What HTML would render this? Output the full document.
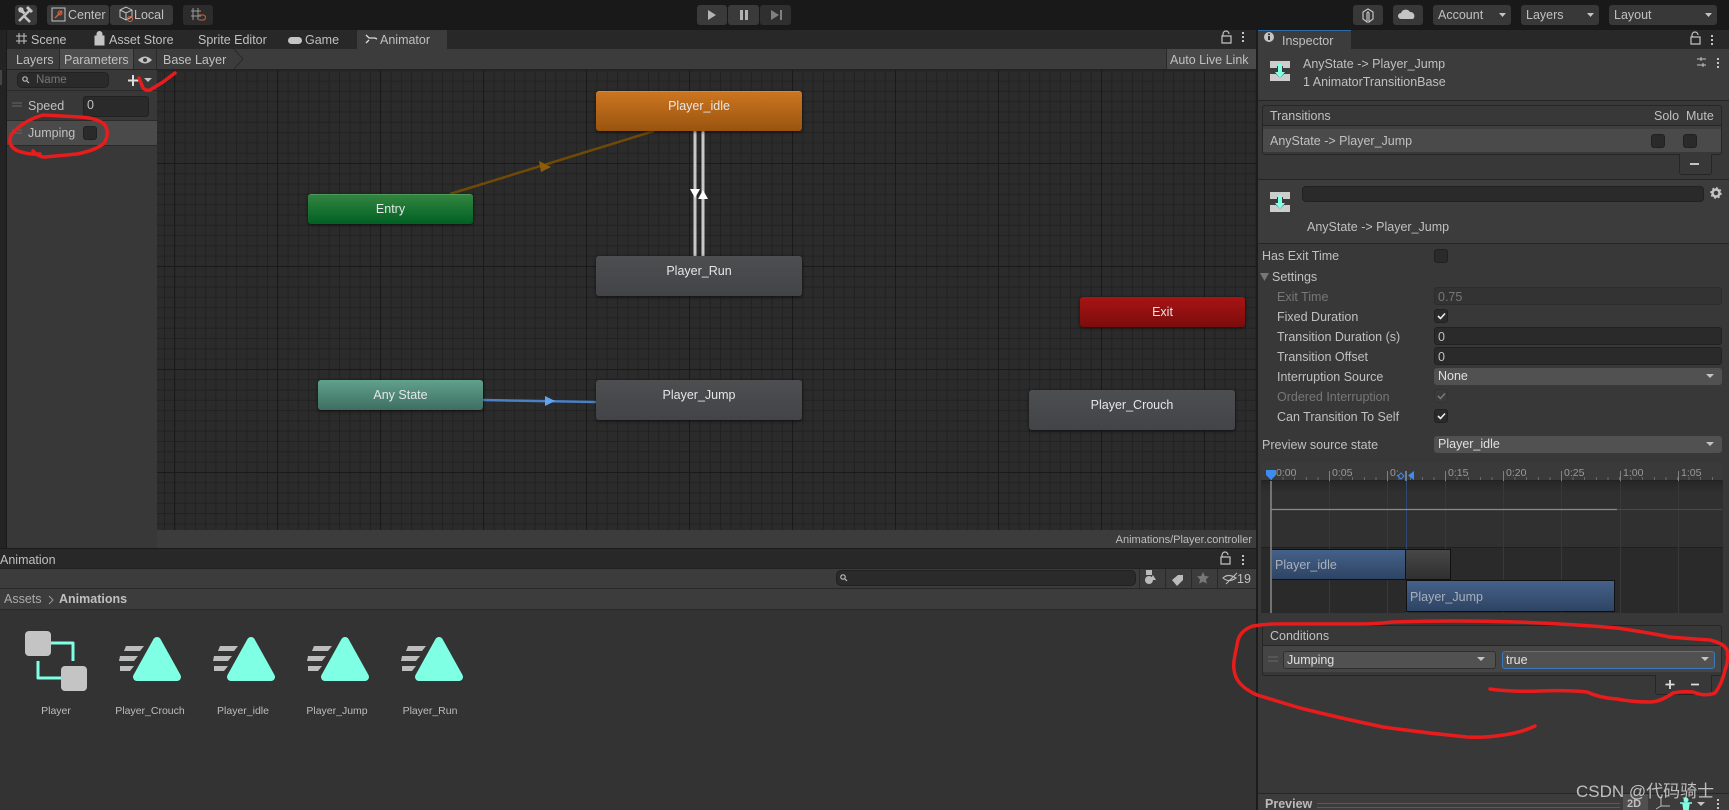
<!DOCTYPE html>
<html><head><meta charset="utf-8"><title>Animator</title>
<style>
html,body{margin:0;padding:0;background:#191919}
#p{position:relative;width:1729px;height:810px;overflow:hidden;background:#191919;font:12.5px/16px "Liberation Sans","Noto Sans CJK SC",sans-serif;color:#c0c0c0}
#p div{position:absolute;box-sizing:border-box}
.t{white-space:nowrap;height:16px}
.c{text-align:center;transform:translateX(-50%)}
.tb{background:#383838;border-radius:3px;height:20px;top:5px}
.dd{background:#515151;border-radius:3px;height:17px}
.f{background:#2a2a2a;border:1px solid #212121;border-radius:3px}
.ck{width:14px;height:14px;background:#2a2a2a;border:1px solid #212121;border-radius:3px;left:1434px}
.dim{color:#777}
svg{position:absolute;left:0;top:0}
.n{border-radius:3px;text-align:center;color:#e6e6e6;font-size:12.5px;box-shadow:0 1px 3px rgba(0,0,0,.6);padding-top:6px;line-height:16px}
.g{background:linear-gradient(#4c4e50,#424447);padding-top:7px}
.s{font-size:10.5px;color:#bdbdbd}
</style></head><body><div id="p">

<!-- toolbar -->
<div class="tb" style="left:15px;width:22px"></div>
<div class="tb" style="left:47px;width:62px"></div>
<div class="tb" style="left:110px;width:63px"></div>
<div class="tb" style="left:183px;width:30px;background:#2c2c2c"></div>
<div class="t" style="left:68px;top:7px;font-size:12.5px">Center</div>
<div class="t" style="left:134px;top:7px;font-size:12.5px">Local</div>
<div class="tb" style="left:697px;width:30px;background:#3a3a3a"></div>
<div class="tb" style="left:728px;width:31px;background:#3a3a3a"></div>
<div class="tb" style="left:760px;width:31px;background:#2f2f2f"></div>
<div class="tb" style="left:1353px;width:30px"></div>
<div class="tb" style="left:1393px;width:30px"></div>
<div class="tb" style="left:1433px;width:78px"></div>
<div class="tb" style="left:1521px;width:78px"></div>
<div class="tb" style="left:1609px;width:108px"></div>
<div class="t" style="left:1438px;top:7px">Account</div>
<div class="t" style="left:1526px;top:7px">Layers</div>
<div class="t" style="left:1614px;top:7px">Layout</div>

<!-- animator window -->
<div style="left:0;top:30px;width:6px;height:518px;background:#232323"></div>
<div style="left:0;top:70px;width:2px;height:15px;background:#444"></div>
<div style="left:7px;top:30px;width:1249px;height:19px;background:#282828"></div>
<div style="left:357px;top:30px;width:90px;height:19px;background:#3c3c3c"></div>
<div class="t" style="left:31px;top:32px">Scene</div>
<div class="t" style="left:109px;top:32px">Asset Store</div>
<div class="t" style="left:198px;top:32px">Sprite Editor</div>
<div class="t" style="left:305px;top:32px">Game</div>
<div class="t" style="left:380px;top:32px">Animator</div>

<div style="left:7px;top:49px;width:1249px;height:21px;background:#3c3c3c;border-bottom:1px solid #232323"></div>
<div style="left:60px;top:49px;width:73px;height:20px;background:#4e4e4e"></div>
<div style="left:59px;top:49px;width:1px;height:20px;background:#2a2a2a"></div>
<div style="left:133px;top:49px;width:1px;height:20px;background:#2a2a2a"></div>
<div style="left:156px;top:49px;width:1px;height:20px;background:#2a2a2a"></div>
<div class="t" style="left:16px;top:52px">Layers</div>
<div class="t" style="left:64px;top:52px">Parameters</div>
<div class="t" style="left:163px;top:52px">Base Layer</div>
<div style="left:1166px;top:49px;width:90px;height:20px;background:#4a4a4a;border-left:1px solid #2a2a2a"></div>
<div class="t" style="left:1170px;top:52px">Auto Live Link</div>

<!-- params panel -->
<div style="left:7px;top:70px;width:150px;height:478px;background:#383838"></div>
<div style="left:7px;top:90px;width:150px;height:1px;background:#2a2a2a"></div>
<div class="f" style="left:17px;top:72px;width:92px;height:16px;border-radius:5px"></div>
<div class="t dim" style="left:36px;top:72px;font-size:11.5px">Name</div>
<div style="left:7px;top:120px;width:150px;height:26px;background:#4a4a4a;border-top:1px solid #2a2a2a;border-bottom:1px solid #2a2a2a"></div>
<div class="t" style="left:28px;top:98px">Speed</div>
<div class="f" style="left:83px;top:96px;width:66px;height:21px"></div>
<div class="t" style="left:87px;top:97px">0</div>
<div class="t" style="left:28px;top:125px">Jumping</div>
<div class="f" style="left:83px;top:126px;width:14px;height:14px"></div>

<!-- graph -->
<div style="left:157px;top:70px;width:1099px;height:460px;background-color:#2b2b2b;
background-image:linear-gradient(#1a1a1a 1px,transparent 1px),linear-gradient(90deg,#1a1a1a 1px,transparent 1px),linear-gradient(#222 1px,transparent 1px),linear-gradient(90deg,#222 1px,transparent 1px);
background-size:103px 103px,103px 103px,10.3px 10.3px,10.3px 10.3px;
background-position:0 93px,17px 0,0 0.3px,7px 0"></div>

<svg width="1729" height="810" viewBox="0 0 1729 810">
  <line x1="450" y1="194" x2="654" y2="131" stroke="#6f4a06" stroke-width="2.5"/>
  <path d="M539 161L551 167L541 172Z" fill="#8c5e08"/>
  <line x1="483" y1="400" x2="596" y2="402" stroke="#4a80c4" stroke-width="2.5"/>
  <path d="M545 396L555 401L545 406Z" fill="#62a4f2"/>
  <line x1="695" y1="131" x2="695" y2="256" stroke="#c8c8c8" stroke-width="3"/>
  <line x1="703" y1="131" x2="703" y2="256" stroke="#c8c8c8" stroke-width="3"/>
  <path d="M690 189L700 189L695 198Z" fill="#fff"/>
  <path d="M698 199L708 199L703 190Z" fill="#fff"/>
</svg>

<div class="n" style="left:596px;top:91px;width:206px;height:40px;background:linear-gradient(#cc7520,#99540f);border-top:1px solid #d9883a">Player_idle</div>
<div class="n" style="left:308px;top:194px;width:165px;height:30px;background:linear-gradient(#32853f,#006024);border-top:1px solid #4d9a5a;padding-top:6px;">Entry</div>
<div class="n g" style="left:596px;top:256px;width:206px;height:40px">Player_Run</div>
<div class="n" style="left:318px;top:380px;width:165px;height:30px;background:linear-gradient(#62a18c,#3d6e62);padding-top:7px">Any State</div>
<div class="n g" style="left:596px;top:380px;width:206px;height:40px">Player_Jump</div>
<div class="n" style="left:1080px;top:297px;width:165px;height:30px;background:linear-gradient(#a81414,#7c0c0c);padding-top:7px">Exit</div>
<div class="n g" style="left:1029px;top:390px;width:206px;height:40px">Player_Crouch</div>

<div style="left:157px;top:530px;width:1099px;height:18px;background:#3c3c3c"></div>
<div class="t s" style="right:477px;top:532px;font-size:11px">Animations/Player.controller</div>

<!-- project -->
<div style="left:0;top:548px;width:1256px;height:262px;background:#333"></div>
<div style="left:0;top:548px;width:1256px;height:20px;background:#282828;border-top:1px solid #1a1a1a"></div>
<div class="t" style="left:0;top:552px">Animation</div>
<div style="left:0;top:568px;width:1256px;height:21px;background:#3c3c3c;border-bottom:1px solid #282828;border-top:1px solid #232323"></div>
<div style="left:0;top:589px;width:1256px;height:21px;background:#3c3c3c;border-bottom:1px solid #282828"></div>
<div class="f" style="left:836px;top:570px;width:300px;height:16px;border-radius:5px"></div>
<div style="left:1139px;top:569px;width:1px;height:19px;background:#2a2a2a"></div>
<div style="left:1165px;top:569px;width:1px;height:19px;background:#2a2a2a"></div>
<div style="left:1191px;top:569px;width:1px;height:19px;background:#2a2a2a"></div>
<div style="left:1217px;top:569px;width:1px;height:19px;background:#2a2a2a"></div>
<div class="t" style="left:1237px;top:571px">19</div>
<div class="t" style="left:4px;top:591px;color:#aaa">Assets</div>
<div class="t" style="left:59px;top:591px;font-weight:bold">Animations</div>
<div class="t s c" style="left:56px;top:703px">Player</div>
<div class="t s c" style="left:150px;top:703px">Player_Crouch</div>
<div class="t s c" style="left:243px;top:703px">Player_idle</div>
<div class="t s c" style="left:337px;top:703px">Player_Jump</div>
<div class="t s c" style="left:430px;top:703px">Player_Run</div>

<!-- inspector -->
<div style="left:1256px;top:30px;width:2px;height:780px;background:#1c1c1c"></div>
<div style="left:1258px;top:30px;width:471px;height:780px;background:#383838"></div>
<div style="left:1258px;top:30px;width:471px;height:19px;background:#282828"></div>
<div style="left:1258px;top:30px;width:93px;height:19px;background:#3c3c3c;border-top:1px solid #2c6aa8"></div>
<div class="t" style="left:1282px;top:33px">Inspector</div>
<div style="left:1258px;top:49px;width:471px;height:52px;background:#3c3c3c;border-bottom:1px solid #262626"></div>
<div class="t" style="left:1303px;top:56px">AnyState -&gt; Player_Jump</div>
<div class="t" style="left:1303px;top:74px">1 AnimatorTransitionBase</div>

<div style="left:1262px;top:105px;width:460px;height:50px;background:#383838;border:1px solid #262626;border-radius:3px"></div>
<div style="left:1263px;top:125px;width:458px;height:1px;background:#262626"></div>
<div style="left:1263px;top:126px;width:458px;height:3px;background:#3f3f3f"></div>
<div style="left:1263px;top:129px;width:458px;height:23px;background:#4a4a4a"></div>
<div class="t" style="left:1270px;top:108px">Transitions</div>
<div class="t" style="left:1654px;top:108px">Solo</div>
<div class="t" style="left:1686px;top:108px">Mute</div>
<div class="t" style="left:1270px;top:133px">AnyState -&gt; Player_Jump</div>
<div class="ck" style="left:1651px;top:134px"></div>
<div class="ck" style="left:1683px;top:134px"></div>
<div style="left:1679px;top:154px;width:33px;height:21px;background:#383838;border:1px solid #262626;border-top:none;border-radius:0 0 3px 3px"></div>
<div style="left:1690px;top:163px;width:9px;height:2px;background:#c4c4c4"></div>
<div style="left:1258px;top:179px;width:471px;height:65px;background:#3c3c3c;border-top:1px solid #262626;border-bottom:1px solid #262626"></div>
<div class="f" style="left:1302px;top:186px;width:402px;height:16px;border-radius:4px"></div>
<div class="t" style="left:1307px;top:219px">AnyState -&gt; Player_Jump</div>

<div class="t" style="left:1262px;top:248px">Has Exit Time</div>
<div class="ck" style="top:249px"></div>
<div class="t" style="left:1272px;top:269px">Settings</div>
<div class="t dim" style="left:1277px;top:289px">Exit Time</div>
<div class="f" style="left:1434px;top:287px;width:288px;height:18px;background:#333;border-color:#2c2c2c"></div>
<div class="t dim" style="left:1438px;top:289px">0.75</div>
<div class="t" style="left:1277px;top:309px">Fixed Duration</div>
<div class="ck" style="top:309px"></div>
<div class="t" style="left:1277px;top:329px">Transition Duration (s)</div>
<div class="f" style="left:1434px;top:327px;width:288px;height:18px"></div>
<div class="t" style="left:1438px;top:329px">0</div>
<div class="t" style="left:1277px;top:349px">Transition Offset</div>
<div class="f" style="left:1434px;top:347px;width:288px;height:18px"></div>
<div class="t" style="left:1438px;top:349px">0</div>
<div class="t" style="left:1277px;top:369px">Interruption Source</div>
<div class="dd" style="left:1434px;top:368px;width:288px"></div>
<div class="t" style="left:1438px;top:368px;color:#e0e0e0">None</div>
<div class="t dim" style="left:1277px;top:389px">Ordered Interruption</div>
<div class="ck" style="top:389px;background:#3a3a3a;border-color:#333"></div>
<div class="t" style="left:1277px;top:409px">Can Transition To Self</div>
<div class="ck" style="top:409px"></div>
<div class="t" style="left:1262px;top:437px">Preview source state</div>
<div class="dd" style="left:1434px;top:436px;width:288px"></div>
<div class="t" style="left:1438px;top:436px;color:#e0e0e0">Player_idle</div>

<!-- timeline -->
<div style="left:1261px;top:463px;width:462px;height:18px;background:#3a3a3a;border-bottom:1px solid #222"></div>
<div style="left:1261px;top:481px;width:462px;height:66px;background:linear-gradient(#262626,#303030 12px,#303030)"></div>
<div style="left:1261px;top:547px;width:462px;height:66px;background:#2a2a2a;border-top:1px solid #1f1f1f"></div>
<div style="left:1271px;top:477px;width:451px;height:3px;background:repeating-linear-gradient(90deg,#6a6a6a 0,#6a6a6a 1px,transparent 1px,transparent 11.6px)"></div>
<svg width="1729" height="810" viewBox="0 0 1729 810">
  <g stroke="#808080"><path d="M1329.500 471v10M1387.500 471v10M1445.500 471v10M1503.500 471v10M1561.500 471v10M1620.500 471v10M1678.500 471v10" fill="none"/></g>
  <g stroke="#383838"><path d="M1329.500 481v132M1387.500 481v132M1445.500 481v132M1503.500 481v132M1561.500 481v132M1620.500 481v132M1678.500 481v132" fill="none"/></g>
  <path d="M1406.500 481v132" stroke="#2e4a72"/>
  <path d="M1271 509.500h346" stroke="#8a8a8a" stroke-width="1.200"/><path d="M1617 509.500h105" stroke="#4a4a4a"/>
</svg>
<div class="t s" style="left:1276px;top:465px;color:#999">0:00</div>
<div class="t s" style="left:1332px;top:465px;color:#999">0:05</div>
<div class="t s" style="left:1390px;top:465px;color:#999">0:</div>
<div class="t s" style="left:1448px;top:465px;color:#999">0:15</div>
<div class="t s" style="left:1506px;top:465px;color:#999">0:20</div>
<div class="t s" style="left:1564px;top:465px;color:#999">0:25</div>
<div class="t s" style="left:1623px;top:465px;color:#999">1:00</div>
<div class="t s" style="left:1681px;top:465px;color:#999">1:05</div>
<div style="left:1272px;top:549px;width:134px;height:31px;background:linear-gradient(#45628a,#2e4463);border:1px solid #111;border-left:none"></div>
<div style="left:1406px;top:549px;width:45px;height:31px;background:linear-gradient(#474747,#303030);border:1px solid #111;border-left:none"></div>
<div style="left:1406px;top:580px;width:209px;height:32px;background:linear-gradient(#45628a,#2e4463);border:1px solid #111"></div>
<div class="t" style="left:1275px;top:557px;color:#a8b0bc">Player_idle</div>
<div class="t" style="left:1410px;top:589px;color:#a8b0bc">Player_Jump</div>

<!-- conditions -->
<div style="left:1262px;top:625px;width:460px;height:51px;background:#383838;border:1px solid #262626;border-radius:3px"></div>
<div style="left:1263px;top:645px;width:458px;height:1px;background:#262626"></div>
<div style="left:1263px;top:646px;width:458px;height:26px;background:#454545"></div>
<div class="t" style="left:1270px;top:628px">Conditions</div>
<div class="dd" style="left:1283px;top:651px;width:213px;height:18px;border:1px solid #2f2f2f"></div>
<div class="t" style="left:1287px;top:652px;color:#e0e0e0">Jumping</div>
<div class="dd" style="left:1502px;top:651px;width:213px;height:18px;border:1px solid #3a79bb"></div>
<div class="t" style="left:1506px;top:652px;color:#e0e0e0">true</div>
<div style="left:1655px;top:675px;width:57px;height:20px;background:#383838;border:1px solid #262626;border-top:none;border-radius:0 0 3px 3px"></div>

<!-- preview bar -->
<div style="left:1258px;top:793px;width:471px;height:17px;background:#3c3c3c;border-top:1px solid #262626"></div>
<div class="t" style="left:1265px;top:796px;font-weight:bold;color:#bbb">Preview</div>
<div style="left:1317px;top:803px;width:303px;height:5px;border-top:1px solid #5a5a5a;border-bottom:1px solid #5a5a5a"></div>
<div style="left:1623px;top:794px;width:25px;height:16px;background:#505050"></div>
<div class="t" style="left:1627px;top:796px;font-size:11px;font-weight:bold">2D</div>

<svg width="1729" height="810" viewBox="0 0 1729 810">
  <!-- toolbar icons: hammer + wrench -->
  <path d="M18 9l2-2 3 1 1 3 1.500 1.500 -2 2L22 13l-3-1z" fill="#c4c4c4"/>
  <path d="M19 21L30 10" stroke="#c4c4c4" stroke-width="2.600" fill="none"/>
  <path d="M27 7l5 5" stroke="#c4c4c4" stroke-width="3" fill="none"/>
  <path d="M24 16l6 6" stroke="#c4c4c4" stroke-width="2.600" fill="none"/>
  <rect x="52" y="8" width="13" height="13" fill="none" stroke="#c4c4c4"/><path d="M55 18L62 11" stroke="#e0623a" stroke-width="1.300"/><circle cx="60" cy="13" r="2" fill="none" stroke="#e0623a"/>
  <path d="M120 10l6-3 6 3v7l-6 3-6-3zM120 10l6 3 6-3M126 13v7" fill="none" stroke="#c4c4c4"/><circle cx="130" cy="19" r="2.500" fill="none" stroke="#e0623a"/>
  <path d="M193 8v12M198 8v12M191 11h10M191 16h10" stroke="#999" fill="none"/><path d="M199 15h4a2 2 0 0 1 0 5h-4" stroke="#c0552d" stroke-width="1.300" fill="none"/>
  <path d="M708 10L716 15L708 20Z" fill="#b4b4b4"/>
  <path d="M740 10h3v10h-3zM745 10h3v10h-3z" fill="#b4b4b4"/>
  <path d="M771 10L779 15L771 20ZM780 10h2v10h-2z" fill="#808080"/>
  <path d="M1363 12l5-3 5 3v7l-4 3v-9l-1-1-1 1v9l-4-3z" fill="none" stroke="#c4c4c4" stroke-width="1.200"/>
  <path d="M1401 19a3 3 0 0 1 0-6a5 5 0 0 1 9-1a4 4 0 0 1 3 7z" fill="#c4c4c4"/>
  <g fill="#c4c4c4">
    <path d="M1499 13h7l-3.500 4zM1587 13h7l-3.500 4zM1705 13h7l-3.500 4z"/>
    <path d="M1706 374h8l-4 4zM1706 442h8l-4 4zM1477 657h8l-4 4zM1701 657h8l-4 4z"/>
    <path d="M144 78h8l-4 4z"/>
    <path d="M1260 273h9l-4.500 8z" fill="#777"/>
    <rect x="1711" y="35" width="2" height="2"/><rect x="1711" y="39" width="2" height="2"/><rect x="1711" y="43" width="2" height="2"/>
    <rect x="1242" y="32" width="2" height="2"/><rect x="1242" y="36" width="2" height="2"/><rect x="1242" y="40" width="2" height="2"/>
    <rect x="1242" y="555" width="2" height="2"/><rect x="1242" y="559" width="2" height="2"/><rect x="1242" y="563" width="2" height="2"/>
    <rect x="1717" y="58" width="2" height="2"/><rect x="1717" y="62" width="2" height="2"/><rect x="1717" y="66" width="2" height="2"/>
    <path d="M1270 61h20v7h-7v-2h-6v2h-7zM1270 74h6l4 4 4-4h6v7h-20z" fill="#cdcdcd"/>
    <path d="M1270 192h20v7h-7v-2h-6v2h-7zM1270 205h6l4 4 4-4h6v7h-20z" fill="#cdcdcd"/>
  </g>
  <rect x="1278" y="64" width="4" height="9" fill="#7fffe3"/><path d="M1275 72h10l-5 6z" fill="#7fffe3"/>
  <rect x="1278" y="195" width="4" height="9" fill="#7fffe3"/><path d="M1275 203h10l-5 6z" fill="#7fffe3"/>
  <!-- tab icons -->
  <path d="M19 33v11M24 33v11M16 36h11M16 41h11" stroke="#c4c4c4" fill="none"/>
  <path d="M95 36h9v9h-9zM97 36v-2a2.500 2.500 0 0 1 5 0v2" fill="#c4c4c4" stroke="#c4c4c4"/>
  <rect x="288" y="37" width="14" height="7" rx="3.500" fill="#c4c4c4"/>
  <path d="M366 35l3 3h6M366 43l3-3M375 38l2 1" stroke="#ddd" stroke-width="1.300" fill="none"/>
  <!-- eye -->
  <path d="M138 60q7-7 14 0q-7 7-14 0z" fill="#c4c4c4"/><circle cx="145" cy="60" r="2" fill="#3c3c3c"/>
  <path d="M234 49l9 10-9 10" fill="none" stroke="#2a2a2a"/>
  <!-- search icons -->
  <circle cx="25" cy="79" r="2.200" fill="none" stroke="#bbb" stroke-width="1.200"/><path d="M27 81l2 2" stroke="#bbb" stroke-width="1.200"/>
  <circle cx="843" cy="577" r="2.200" fill="none" stroke="#bbb" stroke-width="1.200"/><path d="M845 579l2 2" stroke="#bbb" stroke-width="1.200"/>
  <!-- plus -->
  <path d="M133 75v11M128 80.500h11" stroke="#ddd" stroke-width="2"/>
  <!-- drag handles -->
  <g stroke="#666"><path d="M12 103h10M12 106h10M12 130h10M12 133h10M1268 657h10M1268 661h10"/></g>
  <!-- gear, locks, sliders -->
  <circle cx="1716" cy="193" r="3.500" fill="none" stroke="#c4c4c4" stroke-width="2.500"/>
  <circle cx="1716" cy="193" r="5" fill="none" stroke="#c4c4c4" stroke-width="1.500" stroke-dasharray="2 1.900"/>
  <path d="M1691 37h9v7h-9zM1692 37v-2a3 3 0 0 1 6 0" fill="none" stroke="#c4c4c4" stroke-width="1.200"/>
  <path d="M1222 36h9v7h-9zM1223 36v-2a3 3 0 0 1 6 0" fill="none" stroke="#c4c4c4" stroke-width="1.200"/>
  <path d="M1221 557h9v7h-9zM1222 557v-2a3 3 0 0 1 6 0" fill="none" stroke="#c4c4c4" stroke-width="1.200"/>
  <path d="M1697 59h9M1697 65h9M1701 57v4M1703 63v4" stroke="#c4c4c4" fill="none"/>
  <circle cx="1269" cy="37" r="5" fill="#c4c4c4"/><rect x="1268" y="36" width="2" height="4" fill="#333"/><rect x="1268" y="33.500" width="2" height="1.500" fill="#333"/>
  <!-- filter icons -->
  <path d="M1146 570h6v5h-6z" fill="#bbb"/><circle cx="1149" cy="580" r="4" fill="#bbb"/><path d="M1153 575l3 5h-6z" fill="#bbb"/>
  <path d="M1172 580l6-5h5v5l-6 6z" fill="#bbb"/>
  <path d="M1203 572l1.800 4 4.200.400-3 3 .800 4.200-3.800-2-3.800 2 .800-4.200-3-3 4.200-.400z" fill="#777"/>
  <path d="M1223 578q5-5 13 0q-7 5-13 0zM1237 573l-11 11" fill="none" stroke="#bbb" stroke-width="1.100"/>
  <!-- breadcrumb -->
  <path d="M49 596l4 4-4 4" fill="none" stroke="#999"/>
  <!-- checks -->
  <g fill="none" stroke="#eee" stroke-width="1.600"><path d="M1438 316l2.500 2.500 4.500-5M1438 416l2.500 2.500 4.500-5"/></g>
  <path d="M1438 396l2.500 2.500 4.500-5" fill="none" stroke="#777" stroke-width="1.600"/>
  <!-- playhead -->
  <path d="M1271 481v132" stroke="#8a8a8a" stroke-width="1.500"/>
  <path d="M1266 470h10v5l-5 5-5-5z" fill="#3f8cf0"/>
  <path d="M1406 471v10" stroke="#9cc4f0"/><path d="M1414 471v9l-6-4.500z" fill="#3f8cf0"/><path d="M1398 476l3-3 3 3-3 3z" fill="none" stroke="#3f8cf0"/>
  <!-- plus minus conditions -->
  <path d="M1670 680v9M1665.500 684.500h9M1691 684.500h8" stroke="#ddd" stroke-width="1.800"/>
  <!-- preview icons -->
  <path d="M1661 797v9M1661 806h9M1661 806l-5 3" stroke="#bbb" fill="none"/>
  <circle cx="1686" cy="800" r="2.500" fill="#7fffe3"/>
  <path d="M1680 803h12M1683 803l1 7h4l1-7" fill="#7fffe3" stroke="#7fffe3" stroke-width="1.500"/>
  <path d="M1697 802h8l-4 4z" fill="#c4c4c4"/>
  <rect x="1717" y="799" width="2" height="2" fill="#c4c4c4"/><rect x="1717" y="803" width="2" height="2" fill="#c4c4c4"/><rect x="1717" y="807" width="2" height="2" fill="#c4c4c4"/>
  <!-- controller icon -->
  <path d="M51 643h22v18M38 661v17h23" fill="none" stroke="#7fffe3" stroke-width="3" stroke-linejoin="round"/>
  <rect x="25" y="631" width="26" height="25" rx="4" fill="#c4c4c4"/>
  <rect x="61" y="666" width="26" height="25" rx="4" fill="#c4c4c4"/>
  <!-- clip icons -->
  <g><path d="M157 641L177 677H137Z" fill="#7fffe3" stroke="#7fffe3" stroke-width="8" stroke-linejoin="round"/><path d="M126 646h18l-4 5h-16zM120 656h18l-4 5h-15zM120 666h14l-4 5h-10z" fill="#bdbdbd"/></g>
  <g transform="translate(94,0)"><path d="M157 641L177 677H137Z" fill="#7fffe3" stroke="#7fffe3" stroke-width="8" stroke-linejoin="round"/><path d="M126 646h18l-4 5h-16zM120 656h18l-4 5h-15zM120 666h14l-4 5h-10z" fill="#bdbdbd"/></g>
  <g transform="translate(188,0)"><path d="M157 641L177 677H137Z" fill="#7fffe3" stroke="#7fffe3" stroke-width="8" stroke-linejoin="round"/><path d="M126 646h18l-4 5h-16zM120 656h18l-4 5h-15zM120 666h14l-4 5h-10z" fill="#bdbdbd"/></g>
  <g transform="translate(282,0)"><path d="M157 641L177 677H137Z" fill="#7fffe3" stroke="#7fffe3" stroke-width="8" stroke-linejoin="round"/><path d="M126 646h18l-4 5h-16zM120 656h18l-4 5h-15zM120 666h14l-4 5h-10z" fill="#bdbdbd"/></g>
  <!-- red ink -->
  <g fill="none" stroke="#e81c1c" stroke-width="3.500" stroke-linecap="round" stroke-linejoin="round">
    <path d="M175 73L163 82L150 90Q146 91 143 88L139 78"/>
    <path d="M33 151Q38 157 45 157L77 154Q97 150 104 143Q110 134 105 125Q98 118 80 117L43 115Q22 121 11 135Q7 146 18 151Q30 155 40 154"/>
    <path d="M1535 726Q1520 733 1503 735Q1485 738 1467 737Q1425 733 1383 727Q1340 718 1300 708L1257 695Q1240 687 1236 677Q1232 668 1235 655L1238 640Q1241 630 1253 626Q1265 624 1277 624H1360Q1375 624 1393 622Q1455 620 1517 622Q1570 624 1617 628Q1645 632 1670 637Q1695 639 1710 640Q1725 644 1727 650Q1729 660 1725 670Q1722 684 1715 693Q1705 697 1693 692Q1682 691 1673 693Q1660 702 1650 702Q1632 702 1617 699Q1600 698 1587 692Q1570 690 1540 691Q1510 692 1490 689"/>
  </g>
</svg>

<!-- watermark -->
<div class="t" style="left:1576px;top:781px;height:22px;line-height:22px;font-size:17px;color:rgba(235,235,235,.75)">CSDN @代码骑士</div>
</div></body></html>
